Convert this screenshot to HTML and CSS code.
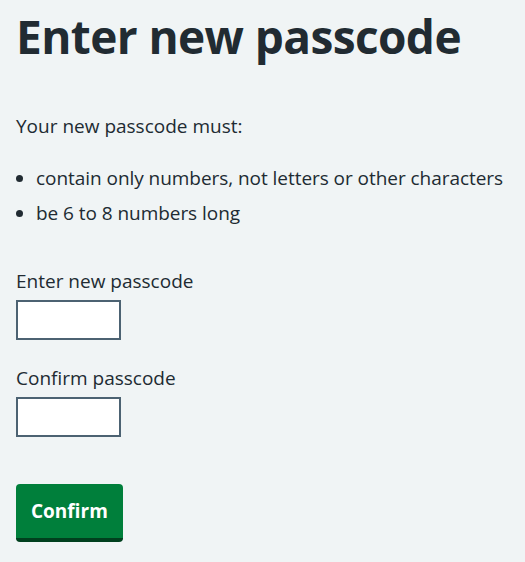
FILE: index.html
```html
<!DOCTYPE html>
<html lang="en">
<head>
  <meta charset="UTF-8" />
  <meta name="viewport" content="width=device-width, initial-scale=1.0"/>
  <title>Enter new passcode</title>
  <link rel="stylesheet" href="styles.css">
</head>
<body>
  <main class="page">
    <h1>Enter new passcode</h1>

    <p class="intro">Your new passcode must:</p>
    <ul class="rules">
      <li>contain only numbers, not letters or other characters</li>
      <li>be 6 to 8 numbers long</li>
    </ul>

    <form class="passcode-form">
      <div class="field">
        <label for="passcode">Enter new passcode</label>
        <input type="password" id="passcode" inputmode="numeric">
      </div>
      <div class="field">
        <label for="confirm">Confirm passcode</label>
        <input type="password" id="confirm" inputmode="numeric">
      </div>
      <button type="submit" class="btn">Confirm</button>
    </form>
  </main>
</body>
</html>
```

FILE: styles.css
```css
body {
  margin: 0;
  background-color: #f0f4f5;
  color: #212b32;
  font-family: 'Open Sans', sans-serif;
}

.page {
  padding: 0 16px;
}

h1 {
  margin: 0;
  padding-top: 7px;
  font-size: 46px;
  font-weight: 700;
  line-height: 58px;
  letter-spacing: -0.6px;
}

.intro {
  margin: 47px 0 0;
  font-size: 19px;
  line-height: 28px;
}

.rules {
  margin: 24px 0 0;
  padding-left: 20px;
  font-size: 19px;
  line-height: 28px;
  letter-spacing: -0.05px;
}

.rules li {
  margin-bottom: 7px;
}

.passcode-form {
  margin-top: 40px;
}

.field {
  margin-bottom: 24px;
}

label {
  display: block;
  font-size: 19px;
  line-height: 28px;
  margin-bottom: 5px;
}

input {
  display: block;
  box-sizing: border-box;
  width: 105px;
  height: 40px;
  border: 2px solid #4c6272;
  background: #fff;
  border-radius: 0;
  padding: 4px;
  font-size: 19px;
}

.btn {
  display: block;
  margin-top: 47px;
  background-color: #007f3b;
  color: #fff;
  border: 0;
  border-bottom: 4px solid #00401e;
  border-radius: 4px;
  padding: 13px 15px 12px;
  font-family: inherit;
  font-size: 19px;
  font-weight: 700;
  line-height: 29px;
}
```
